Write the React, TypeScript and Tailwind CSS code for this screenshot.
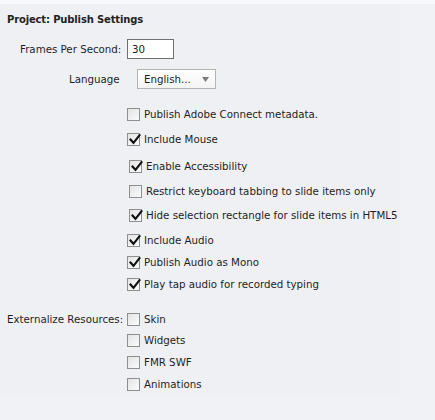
import React from "react";

function Box({ checked }: { checked?: boolean }) {
  return (
    <span className="relative inline-block w-[13px] h-[13px] border border-[#8e8f8f] bg-gradient-to-br from-[#e4e4e4] to-[#fbfbfb] shrink-0">
      {checked && (
        <svg className="absolute left-[1px] top-[0px]" width="12" height="11" viewBox="0 0 12 11">
          <path d="M1.5 5.5 L4.5 8.8 L10.5 1.2" fill="none" stroke="#111" strokeWidth="2.1" strokeLinecap="square" />
        </svg>
      )}
    </span>
  );
}

function Row({
  checked,
  label,
  ml,
  mt,
}: {
  checked?: boolean;
  label: string;
  ml: string;
  mt: string;
}) {
  return (
    <div className={`flex items-center h-[16px] ${ml} ${mt}`}>
      <Box checked={checked} />
      <span className="ml-[4px] whitespace-nowrap">{label}</span>
    </div>
  );
}

export default function App() {
  return (
    <div
      className="w-[435px] h-[420px] bg-[#f0f2f5] text-[#1e1e1e] text-[10.25px] leading-none overflow-hidden"
      style={{ fontFamily: "Tahoma, 'DejaVu Sans', sans-serif" }}
    >
      <div className="h-[4px] bg-[#f8f9fb]" />
      <div className="w-[400px] h-[393px] bg-[#eff0f4] flex flex-col">
        <div className="h-[21px] flex items-end pl-[7px] font-bold text-[10px] tracking-[-0.15px] text-[#222]">
          Project: Publish Settings
        </div>
        <div className="mt-[14px] h-[20px] flex items-center">
          <span className="ml-[20px] w-[107px] whitespace-nowrap">Frames Per Second:</span>
          <div className="w-[47px] h-[20px] bg-white border border-[#6f6f6f] flex items-center pl-[4px]">
            30
          </div>
        </div>
        <div className="mt-[10px] h-[20px] flex items-center">
          <span className="ml-[69px] w-[68px] whitespace-nowrap">Language</span>
          <div className="w-[79px] h-[20px] bg-gradient-to-b from-[#ffffff] to-[#f4f4f4] border border-[#b4b4b4] flex items-center pl-[6px] relative">
            English...
            <svg className="absolute right-[6px] top-[7px]" width="7" height="5" viewBox="0 0 7 5">
              <path d="M0 0 L7 0 L3.5 5 Z" fill="#7a7a7a" />
            </svg>
          </div>
        </div>
        <Row label="Publish Adobe Connect metadata." ml="ml-[127px]" mt="mt-[17px]" />
        <Row checked label="Include Mouse" ml="ml-[127px]" mt="mt-[9px]" />
        <Row checked label="Enable Accessibility" ml="ml-[129px]" mt="mt-[11px]" />
        <Row label="Restrict keyboard tabbing to slide items only" ml="ml-[129px]" mt="mt-[9px]" />
        <Row checked label="Hide selection rectangle for slide items in HTML5" ml="ml-[129px]" mt="mt-[8px]" />
        <Row checked label="Include Audio" ml="ml-[127px]" mt="mt-[9px]" />
        <Row checked label="Publish Audio as Mono" ml="ml-[127px]" mt="mt-[6px]" />
        <Row checked label="Play tap audio for recorded typing" ml="ml-[127px]" mt="mt-[6px]" />
        <div className="flex items-center h-[16px] mt-[19px]">
          <span className="ml-[7px] w-[120px] whitespace-nowrap">Externalize Resources:</span>
          <Box />
          <span className="ml-[4px]">Skin</span>
        </div>
        <Row label="Widgets" ml="ml-[127px]" mt="mt-[5px]" />
        <Row label="FMR SWF" ml="ml-[127px]" mt="mt-[6px]" />
        <Row label="Animations" ml="ml-[127px]" mt="mt-[6px]" />
      </div>
    </div>
  );
}
